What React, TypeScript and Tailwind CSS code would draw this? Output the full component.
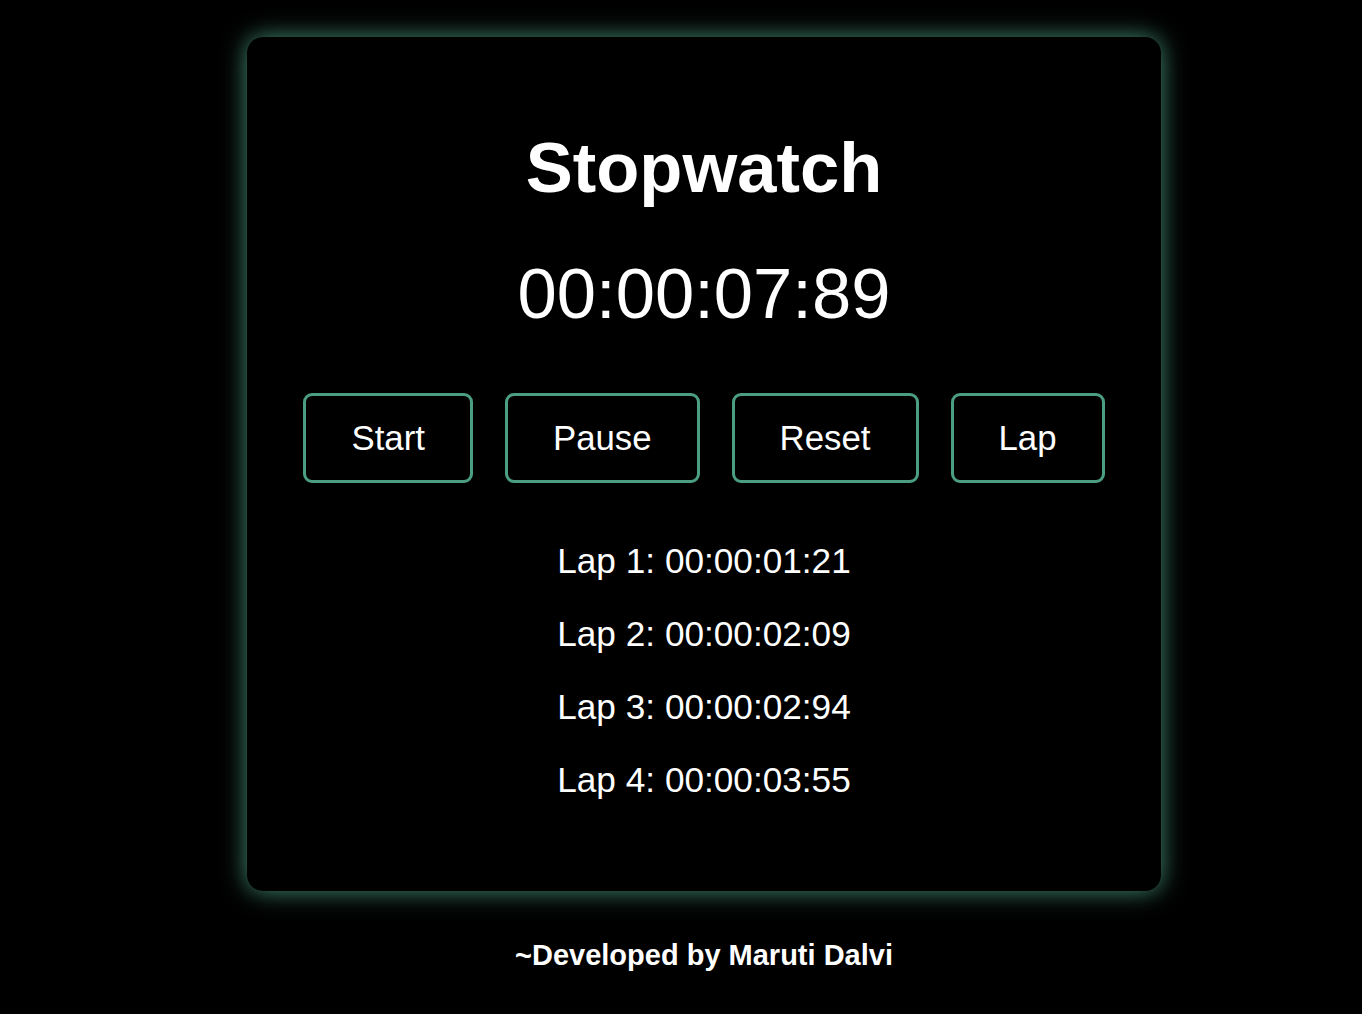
const laps = ["00:00:01:21", "00:00:02:09", "00:00:02:94", "00:00:03:55"];

const buttons = ["Start", "Pause", "Reset", "Lap"];

export default function App() {
  return (
    <div className="min-h-[1014px] bg-black text-white font-['Liberation_Sans',Arial,sans-serif] flex flex-col items-center pt-[37px] pl-[46px]">
      {/* Card */}
      <div className="w-[914px] rounded-[16px] bg-black shadow-[0_0_24px_rgba(75,158,131,0.9)] pt-[91px] pb-[91px] flex flex-col items-center">
        <h1 className="text-[70.5px] leading-[80px] font-bold">Stopwatch</h1>
        <div className="mt-[45.5px] text-[70.6px] leading-[80px]">00:00:07:89</div>

        <div className="mt-[59px] flex gap-[32px]">
          {buttons.map((b) => (
            <button
              key={b}
              className="h-[90px] px-[45px] rounded-[9px] border-[3px] border-[#4b9e83] bg-black text-white text-[34.8px] leading-[40px]"
            >
              {b}
            </button>
          ))}
        </div>

        <ul className="mt-[58px] flex flex-col gap-[33px] items-center">
          {laps.map((t, i) => (
            <li key={i} className="text-[35.2px] leading-[40px]">
              Lap {i + 1}: {t}
            </li>
          ))}
        </ul>
      </div>

      <p className="mt-[47px] text-[29px] leading-[34px] font-bold">~Developed by Maruti Dalvi</p>
    </div>
  );
}
